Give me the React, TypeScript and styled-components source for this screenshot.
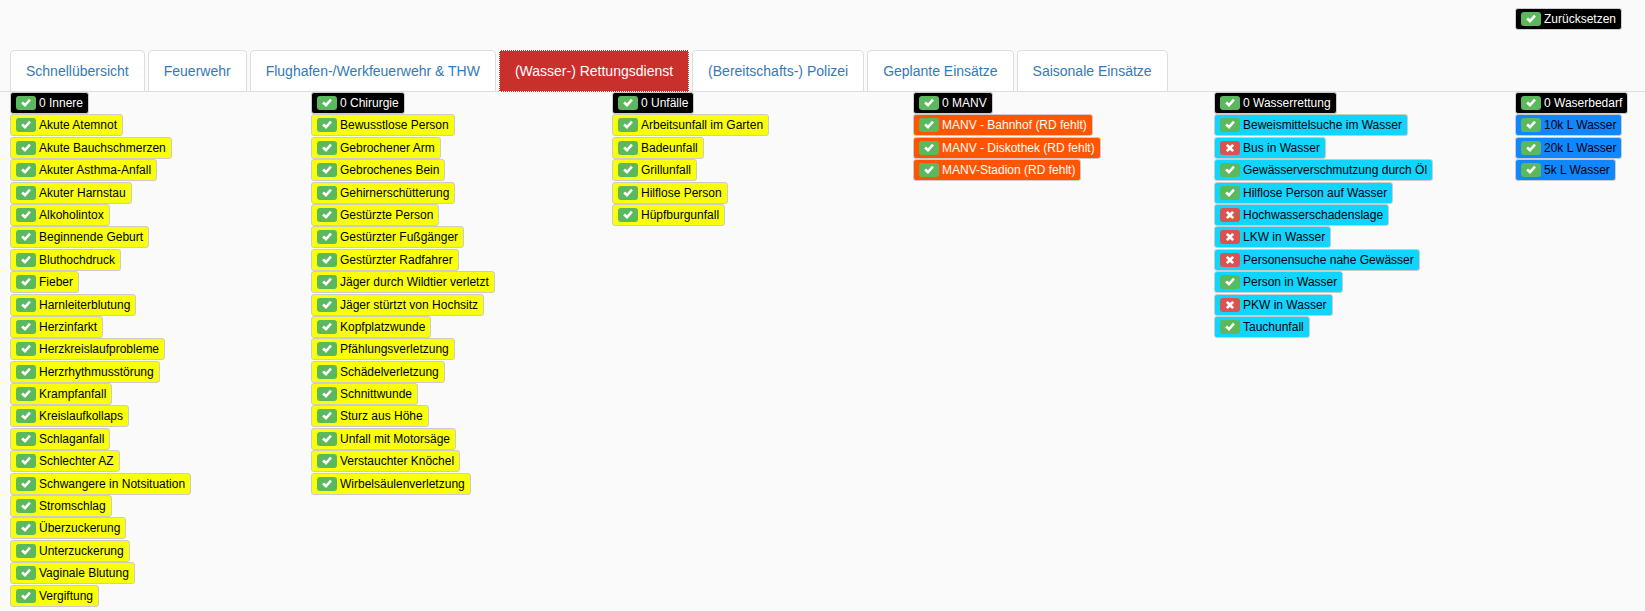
import React from "react";
import styled, { createGlobalStyle } from "styled-components";

const GlobalStyle = createGlobalStyle`
  *, *::before, *::after { box-sizing: border-box; }
  body {
    margin: 0;
    background: #fafafa;
    color: #333;
    font-family: "Liberation Sans", Arial, Helvetica, sans-serif;
    font-size: 14px;
    line-height: 20px;
  }
`;

const Page = styled.main`
  padding: 8px 0;
`;

const ColumnGrid = styled.div`
  display: grid;
  grid-template-columns: repeat(5, minmax(0, 1fr)) 120px;
  padding: 0 10px;
`;

const ResetCell = styled.div`
  grid-column: -2;
  display: flex;
`;

const Tabs = styled.nav`
  display: flex;
  gap: 3px;
  margin-top: 20px;
  padding: 0 10px;
  border-bottom: 1px solid #ddd;
`;

const Tab = styled.a<{ $active?: boolean }>`
  margin-bottom: -1px;
  padding: 10px 15px;
  border: 1px solid ${(p) => (p.$active ? "#c9302c" : "#ddd")};
  border-radius: ${(p) => (p.$active ? "0" : "4px 4px 0 0")};
  background: ${(p) => (p.$active ? "#c9302c" : "#fff")};
  color: ${(p) => (p.$active ? "#fff" : "#337ab7")};
  outline: ${(p) => (p.$active ? "1px dotted #fff" : "none")};
  outline-offset: -1px;
  text-decoration: none;
  white-space: nowrap;
`;

const Column = styled.section`
  font-size: 16px;
  line-height: 1.4;
`;

const ColumnTitle = styled.h2`
  margin: 0;
  font-size: inherit;
  font-weight: normal;
`;

const MissionList = styled.ul`
  margin: 0;
  padding: 0;
  list-style: none;
`;

const tones = {
  black: { background: "#000", color: "#fff" },
  yellow: { background: "#f9ff0a", color: "#000" },
  orange: { background: "#ff5500", color: "#fff" },
  cyan: { background: "#0fd5ff", color: "#000" },
  blue: { background: "#1187ff", color: "#000" },
};

type Tone = keyof typeof tones;

const MissionButton = styled.button<{ $tone: Tone }>`
  display: inline-flex;
  align-items: center;
  gap: 3px;
  height: 22px;
  padding: 0 5px;
  border: 1px solid #ccc;
  border-radius: 3px;
  background: ${(p) => tones[p.$tone].background};
  color: ${(p) => tones[p.$tone].color};
  font-family: inherit;
  font-size: 12px;
  line-height: 18px;
  vertical-align: top;
  white-space: nowrap;
  cursor: pointer;
`;

const Badge = styled.span<{ $on: boolean }>`
  display: flex;
  align-items: center;
  justify-content: center;
  width: 20px;
  height: 14px;
  border-radius: 3px;
  background: ${(p) => (p.$on ? "#5cb85c" : "#d9534f")};
`;

function State({ on }: { on: boolean }) {
  return (
    <Badge $on={on}>
      <svg width="10" height="10" viewBox="0 0 10 10" fill="#fff" aria-hidden="true">
        {on ? (
          <path d="M8 0.7 L9.9 2.4 L4.1 9 L0.2 5.4 L2 3.5 L4 5.2 Z" />
        ) : (
          <path d="M2.7 0.9 L5 3 L7.3 0.9 L9.1 2.7 L6.9 5 L9.1 7.3 L7.3 9.1 L5 7 L2.7 9.1 L0.9 7.3 L3.1 5 L0.9 2.7 Z" />
        )}
      </svg>
    </Badge>
  );
}

function Mission({ label, tone, on = true }: { label: string; tone: Tone; on?: boolean }) {
  return (
    <MissionButton type="button" $tone={tone}>
      <State on={on} />
      {label}
    </MissionButton>
  );
}

const tabs = [
  "Schnellübersicht",
  "Feuerwehr",
  "Flughafen-/Werkfeuerwehr & THW",
  "(Wasser-) Rettungsdienst",
  "(Bereitschafts-) Polizei",
  "Geplante Einsätze",
  "Saisonale Einsätze",
];

const activeTab = "(Wasser-) Rettungsdienst";

const columns: { title: string; tone: Tone; items: string[]; off?: string[] }[] = [
  {
    title: "0 Innere",
    tone: "yellow",
    items: [
      "Akute Atemnot",
      "Akute Bauchschmerzen",
      "Akuter Asthma-Anfall",
      "Akuter Harnstau",
      "Alkoholintox",
      "Beginnende Geburt",
      "Bluthochdruck",
      "Fieber",
      "Harnleiterblutung",
      "Herzinfarkt",
      "Herzkreislaufprobleme",
      "Herzrhythmusstörung",
      "Krampfanfall",
      "Kreislaufkollaps",
      "Schlaganfall",
      "Schlechter AZ",
      "Schwangere in Notsituation",
      "Stromschlag",
      "Überzuckerung",
      "Unterzuckerung",
      "Vaginale Blutung",
      "Vergiftung",
    ],
  },
  {
    title: "0 Chirurgie",
    tone: "yellow",
    items: [
      "Bewusstlose Person",
      "Gebrochener Arm",
      "Gebrochenes Bein",
      "Gehirnerschütterung",
      "Gestürzte Person",
      "Gestürzter Fußgänger",
      "Gestürzter Radfahrer",
      "Jäger durch Wildtier verletzt",
      "Jäger stürtzt von Hochsitz",
      "Kopfplatzwunde",
      "Pfählungsverletzung",
      "Schädelverletzung",
      "Schnittwunde",
      "Sturz aus Höhe",
      "Unfall mit Motorsäge",
      "Verstauchter Knöchel",
      "Wirbelsäulenverletzung",
    ],
  },
  {
    title: "0 Unfälle",
    tone: "yellow",
    items: [
      "Arbeitsunfall im Garten",
      "Badeunfall",
      "Grillunfall",
      "Hilflose Person",
      "Hüpfburgunfall",
    ],
  },
  {
    title: "0 MANV",
    tone: "orange",
    items: [
      "MANV - Bahnhof (RD fehlt)",
      "MANV - Diskothek (RD fehlt)",
      "MANV-Stadion (RD fehlt)",
    ],
  },
  {
    title: "0 Wasserrettung",
    tone: "cyan",
    items: [
      "Beweismittelsuche im Wasser",
      "Bus in Wasser",
      "Gewässerverschmutzung durch Öl",
      "Hilflose Person auf Wasser",
      "Hochwasserschadenslage",
      "LKW in Wasser",
      "Personensuche nahe Gewässer",
      "Person in Wasser",
      "PKW in Wasser",
      "Tauchunfall",
    ],
    off: [
      "Bus in Wasser",
      "Hochwasserschadenslage",
      "LKW in Wasser",
      "Personensuche nahe Gewässer",
      "PKW in Wasser",
    ],
  },
  {
    title: "0 Waserbedarf",
    tone: "blue",
    items: ["10k L Wasser", "20k L Wasser", "5k L Wasser"],
  },
];

export default function App() {
  return (
    <>
      <GlobalStyle />
      <Page>
        <ColumnGrid>
          <ResetCell>
            <Mission label="Zurücksetzen" tone="black" />
          </ResetCell>
        </ColumnGrid>
        <Tabs>
          {tabs.map((tab) => (
            <Tab
              key={tab}
              href="#"
              $active={tab === activeTab}
              aria-current={tab === activeTab ? "page" : undefined}
            >
              {tab}
            </Tab>
          ))}
        </Tabs>
        <ColumnGrid>
          {columns.map((column) => (
            <Column key={column.title}>
              <ColumnTitle>
                <Mission label={column.title} tone="black" />
              </ColumnTitle>
              <MissionList>
                {column.items.map((item) => (
                  <li key={item}>
                    <Mission label={item} tone={column.tone} on={!column.off?.includes(item)} />
                  </li>
                ))}
              </MissionList>
            </Column>
          ))}
        </ColumnGrid>
      </Page>
    </>
  );
}
